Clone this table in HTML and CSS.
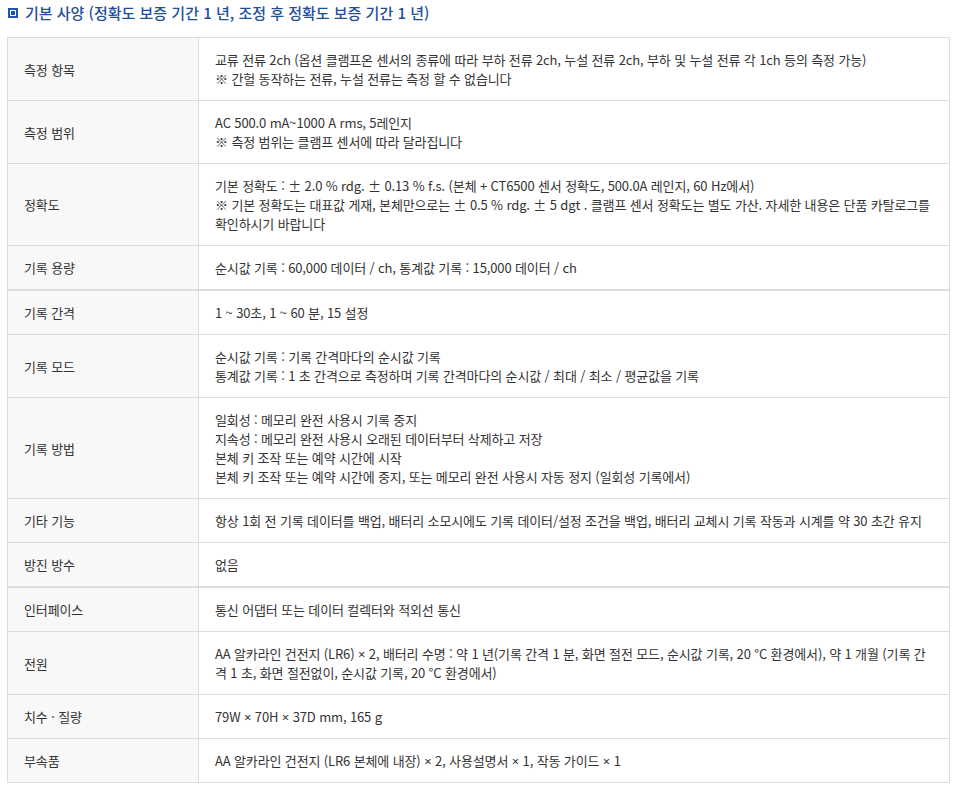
FILE: index.html
```html
<!DOCTYPE html>
<html lang="ko">
<head>
    <meta charset="UTF-8">
    <meta name="viewport" content="width=device-width, initial-scale=1.0">
    <title>기본 사양</title>
    <link rel="stylesheet" href="styles.css">
</head>
<body>
    <div class="spec">
        <h3 class="titulo"><span class="marca"></span>기본 사양 (정확도 보증 기간 1 년, 조정 후 정확도 보증 기간 1 년)</h3>

        <table class="tabela">
            <tr>
                <th>측정 항목</th>
                <td>교류 전류 2ch (옵션 클램프온 센서의 종류에 따라 부하 전류 2ch, 누설 전류 2ch, 부하 및 누설 전류 각 1ch 등의 측정 가능)<br>※ 간헐 동작하는 전류, 누설 전류는 측정 할 수 없습니다</td>
            </tr>
            <tr>
                <th>측정 범위</th>
                <td>AC 500.0 mA~1000 A rms, 5레인지<br>※ 측정 범위는 클램프 센서에 따라 달라집니다</td>
            </tr>
            <tr>
                <th>정확도</th>
                <td>기본 정확도 : ± 2.0 % rdg. ± 0.13 % f.s. (본체 + CT6500 센서 정확도, 500.0A 레인지, 60 Hz에서)<br>※ 기본 정확도는 대표값 게재, 본체만으로는 ± 0.5 % rdg. ± 5 dgt . 클램프 센서 정확도는 별도 가산. 자세한 내용은 단품 카탈로그를 확인하시기 바랍니다</td>
            </tr>
            <tr>
                <th>기록 용량</th>
                <td>순시값 기록 : 60,000 데이터 / ch, 통계값 기록 : 15,000 데이터 / ch</td>
            </tr>
            <tr class="grupo">
                <th>기록 간격</th>
                <td>1 ~ 30초, 1 ~ 60 분, 15 설정</td>
            </tr>
            <tr>
                <th>기록 모드</th>
                <td>순시값 기록 : 기록 간격마다의 순시값 기록<br>통계값 기록 : 1 초 간격으로 측정하며 기록 간격마다의 순시값 / 최대 / 최소 / 평균값을 기록</td>
            </tr>
            <tr>
                <th>기록 방법</th>
                <td>일회성 : 메모리 완전 사용시 기록 중지<br>지속성 : 메모리 완전 사용시 오래된 데이터부터 삭제하고 저장<br>본체 키 조작 또는 예약 시간에 시작<br>본체 키 조작 또는 예약 시간에 중지, 또는 메모리 완전 사용시 자동 정지 (일회성 기록에서)</td>
            </tr>
            <tr>
                <th>기타 기능</th>
                <td>항상 1회 전 기록 데이터를 백업, 배터리 소모시에도 기록 데이터/설정 조건을 백업, 배터리 교체시 기록 작동과 시계를 약 30 초간 유지</td>
            </tr>
            <tr>
                <th>방진 방수</th>
                <td>없음</td>
            </tr>
            <tr class="grupo">
                <th>인터페이스</th>
                <td>통신 어댑터 또는 데이터 컬렉터와 적외선 통신</td>
            </tr>
            <tr>
                <th>전원</th>
                <td>AA 알카라인 건전지 (LR6) <span class="vezes">×</span> 2, 배터리 수명 : 약 1 년(기록 간격 1 분, 화면 절전 모드, 순시값 기록, 20 °C 환경에서), 약 1 개월 (기록 간격 1 초, 화면 절전없이, 순시값 기록, 20 °C 환경에서)</td>
            </tr>
            <tr>
                <th>치수 · 질량</th>
                <td>79W <span class="vezes">×</span> 70H <span class="vezes">×</span> 37D mm, 165 g</td>
            </tr>
            <tr>
                <th>부속품</th>
                <td>AA 알카라인 건전지 (LR6 본체에 내장) <span class="vezes">×</span> 2, 사용설명서 <span class="vezes">×</span> 1, 작동 가이드 <span class="vezes">×</span> 1</td>
            </tr>
        </table>
    </div>
</body>
</html>
```

FILE: styles.css
```css
body {
    margin: 0;
    background: #fff;
    font-family: "Noto Sans CJK KR", "Noto Sans", sans-serif;
    color: #333;
}

.spec {
    width: 943px;
    margin-left: 7px;
}

.titulo {
    display: flex;
    align-items: center;
    margin: 0;
    height: 25px;
    font-size: 15px;
    font-weight: 500;
    color: #1f4e9c;
    line-height: 25px;
}

.marca {
    box-sizing: border-box;
    width: 10px;
    height: 10px;
    margin: 0 7px 0 1px;
    border: 2px solid #1f56ad;
    padding: 1px;
    background: #1f56ad;
    background-clip: content-box;
    position: relative;
}

.marca::after {
    content: "";
    position: absolute;
    left: 0;
    top: 0;
    right: 0;
    bottom: 0;
    border: 1px solid #fff;
}

.tabela {
    width: 100%;
    margin-top: 12px;
    border-collapse: collapse;
    font-size: 13px;
    line-height: 19px;
    letter-spacing: -0.13px;
}

.tabela th,
.tabela td {
    border: 1px solid #dcdcdc;
    padding: 12px 16px;
    text-align: left;
    vertical-align: middle;
}

.tabela th {
    width: 158px;
    font-weight: 400;
    background: #f8f8f8;
    color: #333;
}

.tabela td {
    color: #333;
}

.tabela tr.grupo th,
.tabela tr.grupo td {
    border-top: 2px solid #dcdcdc;
}

/* sinal de multiplicação menor, como no original */
.vezes {
    font-family: "Noto Sans", sans-serif;
    line-height: 0;
}
```
